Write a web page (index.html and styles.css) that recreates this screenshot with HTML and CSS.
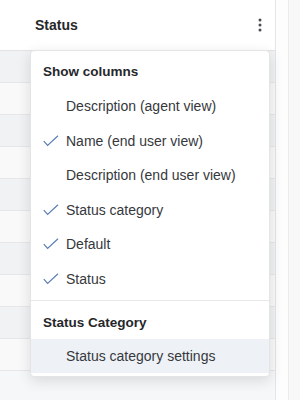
FILE: index.html
```html
<!DOCTYPE html>
<html>
<head>
    <title>Status columns</title>
    <link rel="stylesheet" href="styles.css">
</head>
<body>
    <div class="page">
        <div class="table">
            <div class="table-header">
                <span class="header-title">Status</span>
                <button class="kebab" aria-label="More">
                    <svg width="4" height="14" viewBox="0 0 4 14">
                        <circle cx="2" cy="2" r="1.5"/>
                        <circle cx="2" cy="7" r="1.5"/>
                        <circle cx="2" cy="12" r="1.5"/>
                    </svg>
                </button>
            </div>
            <div class="row shade"></div>
            <div class="row"></div>
            <div class="row shade"></div>
            <div class="row"></div>
            <div class="row shade"></div>
            <div class="row"></div>
            <div class="row shade"></div>
            <div class="row"></div>
            <div class="row shade"></div>
            <div class="row"></div>
        </div>
        <div class="rail"></div>
        <div class="rail-edge"></div>

        <div class="menu">
            <div class="menu-group">
                <div class="menu-heading">Show columns</div>
                <div class="menu-item"><span class="check"></span>Description (agent view)</div>
                <div class="menu-item"><span class="check"><svg width="16" height="12" viewBox="0 0 16 12"><path d="M0.8 6.2 L4.6 10.4 L15 0.8"/></svg></span>Name (end user view)</div>
                <div class="menu-item"><span class="check"></span>Description (end user view)</div>
                <div class="menu-item"><span class="check"><svg width="16" height="12" viewBox="0 0 16 12"><path d="M0.8 6.2 L4.6 10.4 L15 0.8"/></svg></span>Status category</div>
                <div class="menu-item"><span class="check"><svg width="16" height="12" viewBox="0 0 16 12"><path d="M0.8 6.2 L4.6 10.4 L15 0.8"/></svg></span>Default</div>
                <div class="menu-item"><span class="check"><svg width="16" height="12" viewBox="0 0 16 12"><path d="M0.8 6.2 L4.6 10.4 L15 0.8"/></svg></span>Status</div>
            </div>
            <div class="menu-group last">
                <div class="menu-heading">Status Category</div>
                <div class="menu-item active"><span class="check"></span>Status category settings</div>
            </div>
        </div>
    </div>
</body>
</html>
```

FILE: styles.css
```css
body, html {
    margin: 0;
    height: 100%;
    font-family: "Liberation Sans", Arial, sans-serif;
    font-size: 14px;
    color: #2c2d30;
}

.page {
    position: relative;
    display: flex;
    height: 100%;
    background-color: #f6f7f8;
}

.table {
    width: 275px;
    border-right: 1px solid #e4e5e7;
}

.table-header {
    height: 50px;
    display: flex;
    align-items: center;
    justify-content: space-between;
    padding: 0 13px 0 35px;
    background-color: #fff;
    border-bottom: 1px solid #e2e3e5;
}

.header-title {
    font-weight: bold;
    color: #26272a;
}

.kebab {
    border: none;
    background: none;
    padding: 0;
    display: flex;
    fill: #4a4d52;
}

.row {
    height: 31px;
    border-bottom: 1px solid #e6e7e9;
    background-color: #f9f9fa;
}

.row.shade {
    background-color: #f1f2f3;
}

.rail {
    width: 12px;
    background-color: #fdfdfd;
    border-right: 1px solid #ececee;
}

.rail-edge {
    flex: 1;
    background-color: #f8f8f9;
}

.menu {
    position: absolute;
    left: 30px;
    top: 50px;
    width: 238px;
    background-color: #fff;
    border: 1px solid #e3e4e6;
    border-radius: 4px;
    box-shadow: 0 4px 14px rgba(0, 0, 0, 0.12);
    overflow: hidden;
}

.menu-group {
    padding-bottom: 4px;
    border-bottom: 1px solid #e8e9eb;
}

.menu-group.last {
    padding-bottom: 3px;
    border-bottom: none;
}

.menu-heading {
    padding: 12px 12px 9px;
    line-height: 17px;
    font-size: 13.5px;
    font-weight: bold;
    color: #26272a;
}

.menu-group.last .menu-heading {
    padding-top: 13px;
    padding-bottom: 8px;
}

.menu-item {
    height: 34.5px;
    display: flex;
    align-items: center;
    padding-left: 12px;
    color: #36383c;
}

.menu-item.active {
    height: 34px;
    background-color: #eef2f7;
}

.check {
    width: 23px;
    display: flex;
    align-items: center;
}

.check path {
    fill: none;
    stroke: #5a7eb4;
    stroke-width: 1.2;
}
```
